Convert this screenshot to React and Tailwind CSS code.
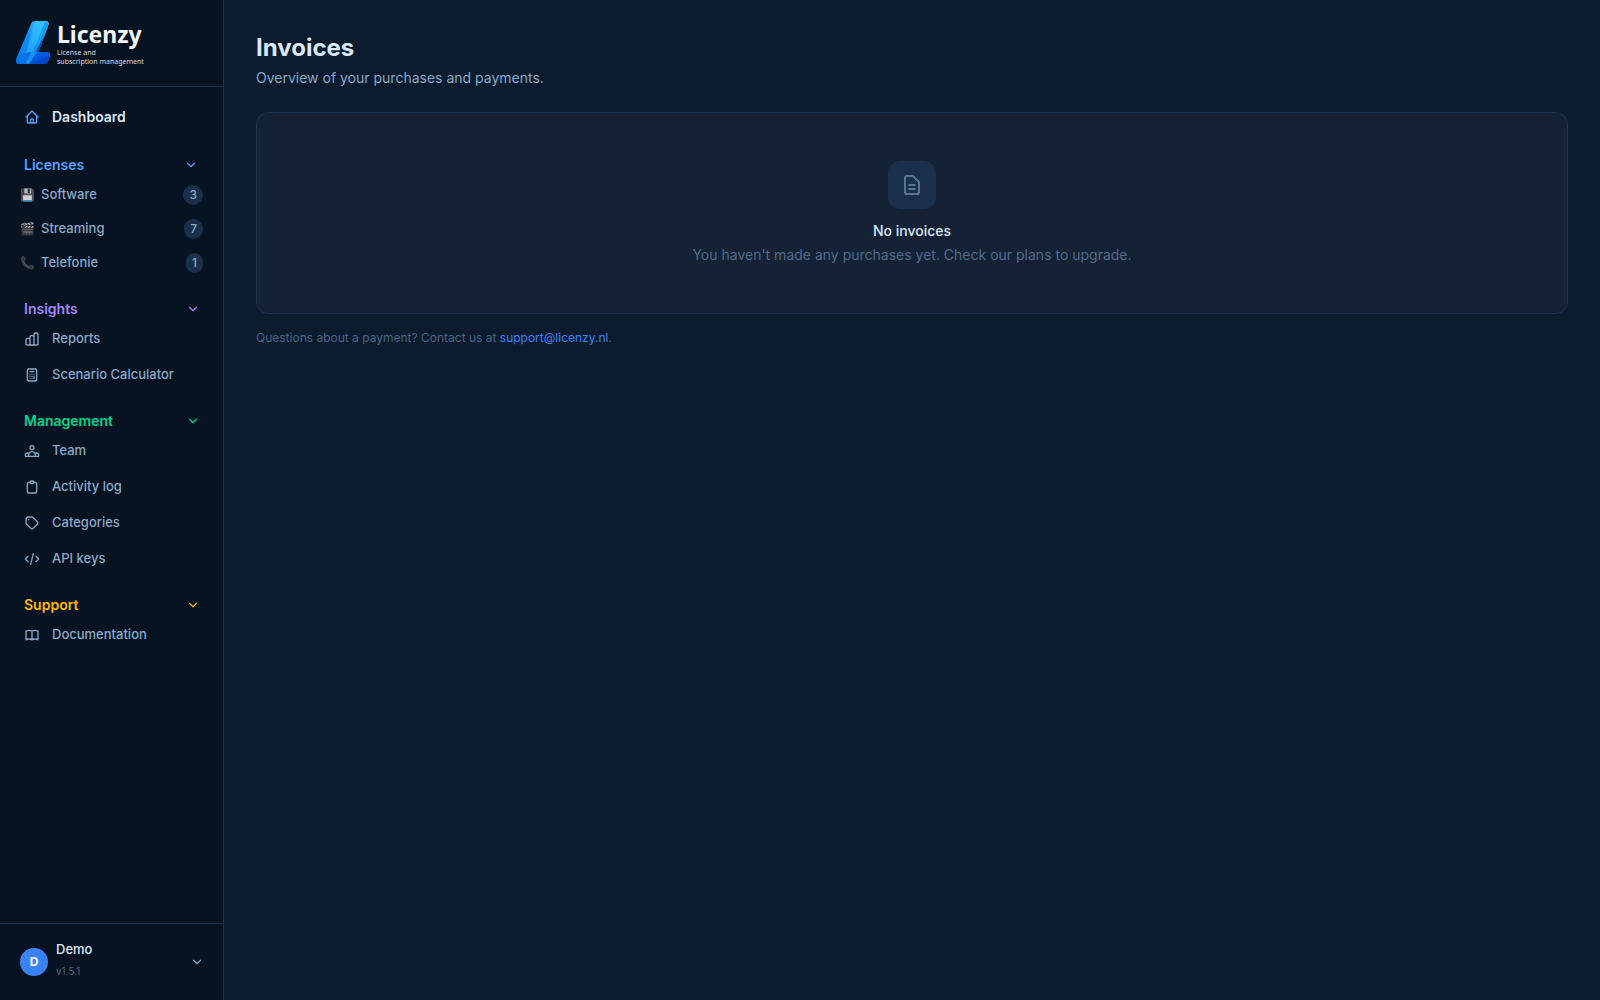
import React, { useState } from "react";

const icons = {
  home: "m3 12 2-2m0 0 7-7 7 7M5 10v10a1 1 0 0 0 1 1h3m10-11 2 2m-2-2v10a1 1 0 0 1-1 1h-3m-6 0a1 1 0 0 0 1-1v-4a1 1 0 0 1 1-1h2a1 1 0 0 1 1 1v4a1 1 0 0 0 1 1m-6 0h6",
  chart: "M9 19v-6a2 2 0 0 0-2-2H5a2 2 0 0 0-2 2v6a2 2 0 0 0 2 2h2a2 2 0 0 0 2-2Zm0 0V9a2 2 0 0 1 2-2h2a2 2 0 0 1 2 2v10m-6 0a2 2 0 0 0 2 2h2a2 2 0 0 0 2-2m0 0V5a2 2 0 0 1 2-2h2a2 2 0 0 1 2 2v14a2 2 0 0 1-2 2h-2a2 2 0 0 1-2-2Z",
  calculator: "M9 7h6m0 10v-3m-3 3h.01M9 17h.01M9 14h.01M12 14h.01M15 11h.01M12 11h.01M9 11h.01M7 21h10a2 2 0 0 0 2-2V5a2 2 0 0 0-2-2H7a2 2 0 0 0-2 2v14a2 2 0 0 0 2 2Z",
  team: "M17 20h5v-2a3 3 0 0 0-5.356-1.857M17 20H7m10 0v-2c0-.656-.126-1.283-.356-1.857M7 20H2v-2a3 3 0 0 1 5.356-1.857M7 20v-2c0-.656.126-1.283.356-1.857m0 0a5.002 5.002 0 0 1 9.288 0M15 7a3 3 0 1 1-6 0 3 3 0 0 1 6 0Z",
  clipboard: "M9 5H7a2 2 0 0 0-2 2v12a2 2 0 0 0 2 2h10a2 2 0 0 0 2-2V7a2 2 0 0 0-2-2h-2M9 5a2 2 0 0 0 2 2h2a2 2 0 0 0 2-2M9 5a2 2 0 0 1 2-2h2a2 2 0 0 1 2 2",
  tag: "M7 7h.01M7 3h5c.512 0 1.024.195 1.414.586l7 7a2 2 0 0 1 0 2.828l-7 7a2 2 0 0 1-2.828 0l-7-7A2 2 0 0 1 3 12V7a4 4 0 0 1 4-4Z",
  code: "m10 20 4-16m4 4 4 4-4 4M6 16l-4-4 4-4",
  book: "M12 6.253v13m0-13C10.832 5.477 9.246 5 7.5 5S4.168 5.477 3 6.253v13C4.168 18.477 5.754 18 7.5 18s3.332.477 4.5 1.253m0-13C13.168 5.477 14.754 5 16.5 5c1.747 0 3.332.477 4.5 1.253v13C19.832 18.477 18.247 18 16.5 18c-1.746 0-3.332.477-4.5 1.253",
  document: "M9 12h6M9 16h6M17 21H7a2 2 0 0 1-2-2V5a2 2 0 0 1 2-2h5.586a1 1 0 0 1 .707.293l5.414 5.414a1 1 0 0 1 .293.707V19a2 2 0 0 1-2 2Z",
  chevron: "m6 9 6 6 6-6",
};

const sections = [
  {
    title: "Insights",
    color: "text-[#a684ff]",
    items: [
      { label: "Reports", icon: "chart" },
      { label: "Scenario Calculator", icon: "calculator" },
    ],
  },
  {
    title: "Management",
    color: "text-[#00d492]",
    items: [
      { label: "Team", icon: "team" },
      { label: "Activity log", icon: "clipboard" },
      { label: "Categories", icon: "tag" },
      { label: "API keys", icon: "code" },
    ],
  },
  {
    title: "Support",
    color: "text-[#ffb900]",
    items: [{ label: "Documentation", icon: "book" }],
  },
];

const categories = [
  { label: "Software", emoji: "💾", count: 3 },
  { label: "Streaming", emoji: "🎬", count: 7 },
  { label: "Telefonie", emoji: "📞", count: 1 },
];

const Icon = ({ name, className, strokeWidth = 2 }) => (
  <svg
    className={className}
    viewBox="0 0 24 24"
    fill="none"
    stroke="currentColor"
    strokeWidth={strokeWidth}
    strokeLinecap="round"
    strokeLinejoin="round"
    aria-hidden="true"
  >
    <path d={icons[name]} />
  </svg>
);

const Logo = () => (
  <a href="#" className="flex gap-[7px]">
    <svg className="h-12 w-[34px] shrink-0" viewBox="0 0 34 48" aria-hidden="true">
      <defs>
        <linearGradient id="stem" x1="0" y1="1" x2="1" y2="0">
          <stop offset="0" stopColor="#0878f5" />
          <stop offset="0.5" stopColor="#0c90f8" />
          <stop offset="1" stopColor="#50d0ff" />
        </linearGradient>
        <linearGradient id="face" x1="0" y1="1" x2="0.6" y2="0">
          <stop offset="0" stopColor="#1298fa" />
          <stop offset="1" stopColor="#38bfff" />
        </linearGradient>
        <linearGradient id="foot" x1="0" y1="0" x2="1" y2="1">
          <stop offset="0" stopColor="#0868ea" />
          <stop offset="1" stopColor="#0050d8" />
        </linearGradient>
      </defs>
      <path d="M15 4q1-3 5-3h9q5 0 3 5L22 33h9q4 0 3 3l-2 5q-1 3-5 3H4q-6 0-3-7Z" fill="url(#stem)" />
      <path d="M28 15 14 44h8l4-11h-4l5-14Z" fill="#0752b8" />
      <path d="M19 1h10q5 0 3 5l-4 10q-3 6-8 8L11 44H7Z" fill="url(#face)" />
      <path d="M32 6 28 16q-3 6-8 8l9-22q4 0 3 4Z" fill="#12a0f5" />
      <path d="M1 37q6-4 14-5h16q4 0 3 3l-2 6q-1 3-5 3H4q-5 0-3-7Z" fill="url(#foot)" />
      <path d="M1 37q6-4 13-5L8 44H4q-5 0-3-7Z" fill="#0674e8" />
      <path d="M15 32 9 44h4l8-12Z" fill="#1492fa" />
      <path d="M15 42q8-1 18-7l-1 6q-1 3-5 3H12Z" fill="#0048ca" />
    </svg>
    <span className="flex flex-col font-['Noto_Sans']">
      <span className="text-[23px] leading-7 font-bold text-[#f2f5f8]">Licenzy</span>
      <span className="text-[7px] leading-[9px] text-[#d5dbe3]">
        License and
        <br />
        subscription management
      </span>
    </span>
  </a>
);

const SectionHeader = ({ title, color, onClick, open, padding = "pr-[23px]" }) => (
  <button
    type="button"
    onClick={onClick}
    aria-expanded={open}
    className={`flex h-6 w-full items-center justify-between pl-6 text-sm font-semibold ${padding} ${color}`}
  >
    {title}
    <Icon name="chevron" className="size-3.5" />
  </button>
);

const Sidebar = () => {
  const [closed, setClosed] = useState({});
  const toggle = (title) => setClosed({ ...closed, [title]: !closed[title] });

  return (
    <aside className="flex w-56 shrink-0 flex-col border-r border-[#1e3252] bg-[#071320]">
      <div className="border-b border-[#1e3252] px-4 pt-5 pb-[18px]">
        <Logo />
      </div>

      <nav className="flex-1 pt-3">
        <a href="#" className="flex h-9 items-center gap-3 px-6 text-sm font-semibold text-[#dbe8f8]">
          <Icon name="home" className="size-4 text-[#51a2ff]" />
          Dashboard
        </a>

        {/* License categories */}
        <div className="mt-[18px] pb-px">
          <SectionHeader
            title="Licenses"
            color="text-[#51a2ff]"
            padding="pr-[25px]"
            open={!closed.Licenses}
            onClick={() => toggle("Licenses")}
          />
          {!closed.Licenses && (
            <div className="pt-px">
              {categories.map((category) => (
                <a
                  key={category.label}
                  href="#"
                  className="flex h-[34px] items-center px-5 text-[13px] font-medium text-[#8aa9c8]"
                >
                  <span className="w-[21px] text-xs opacity-80">{category.emoji}</span>
                  <span className="flex-1">{category.label}</span>
                  <span className="rounded-full bg-[#1a2f4a] px-1.5 text-xs leading-5">{category.count}</span>
                </a>
              ))}
            </div>
          )}
        </div>

        {sections.map((section) => (
          <div key={section.title} className="mt-4">
            <SectionHeader
              title={section.title}
              color={section.color}
              open={!closed[section.title]}
              onClick={() => toggle(section.title)}
            />
            {!closed[section.title] &&
              section.items.map((item) => (
                <a
                  key={item.label}
                  href="#"
                  className="flex h-9 items-center gap-3 px-6 text-[13px] font-medium text-[#8aa9c8]"
                >
                  <Icon name={item.icon} className="size-4" />
                  {item.label}
                </a>
              ))}
          </div>
        ))}
      </nav>

      <button type="button" className="flex items-center gap-2 border-t border-[#1e3252] py-4 pr-[19px] pl-5 text-left">
        <span className="flex size-7 items-center justify-center rounded-full bg-[#3b82f6] text-xs font-bold text-white">
          D
        </span>
        <span className="flex flex-1 flex-col gap-1 pb-1">
          <span className="text-[13px] leading-[18px] font-medium text-[#dbe8f8]">Demo</span>
          <span className="text-[10px] leading-[18px] text-[#4a6585]">v1.5.1</span>
        </span>
        <Icon name="chevron" className="size-3.5 text-[#8aa9c8]" />
      </button>
    </aside>
  );
};

const App = () => {
  return (
    <div className="flex min-h-screen bg-[#0c1b2d] font-['Inter',sans-serif]">
      <Sidebar />
      <main className="flex-1 p-8">
        <h1 className="text-2xl font-bold text-[#dbe8f8]">Invoices</h1>
        <p className="mt-1 text-sm text-[#8aa9c8]">Overview of your purchases and payments.</p>

        <section className="mt-6 flex flex-col items-center rounded-xl border border-[#1e3252] bg-[#152134] py-12 text-sm">
          <div className="flex size-12 items-center justify-center rounded-xl bg-[#1a2f4a] text-[#5a7595]">
            <Icon name="document" className="size-6" />
          </div>
          <h2 className="mt-3 font-medium text-[#dbe8f8]">No invoices</h2>
          <p className="mt-1 text-[#4f6b8e]">You haven't made any purchases yet. Check our plans to upgrade.</p>
        </section>

        <p className="mt-4 text-xs text-[#4a6585]">
          Questions about a payment? Contact us at{" "}
          <a href="mailto:support@licenzy.nl" className="text-[#3b82f6]">
            support@licenzy.nl
          </a>
          .
        </p>
      </main>
    </div>
  );
};

export default App;
